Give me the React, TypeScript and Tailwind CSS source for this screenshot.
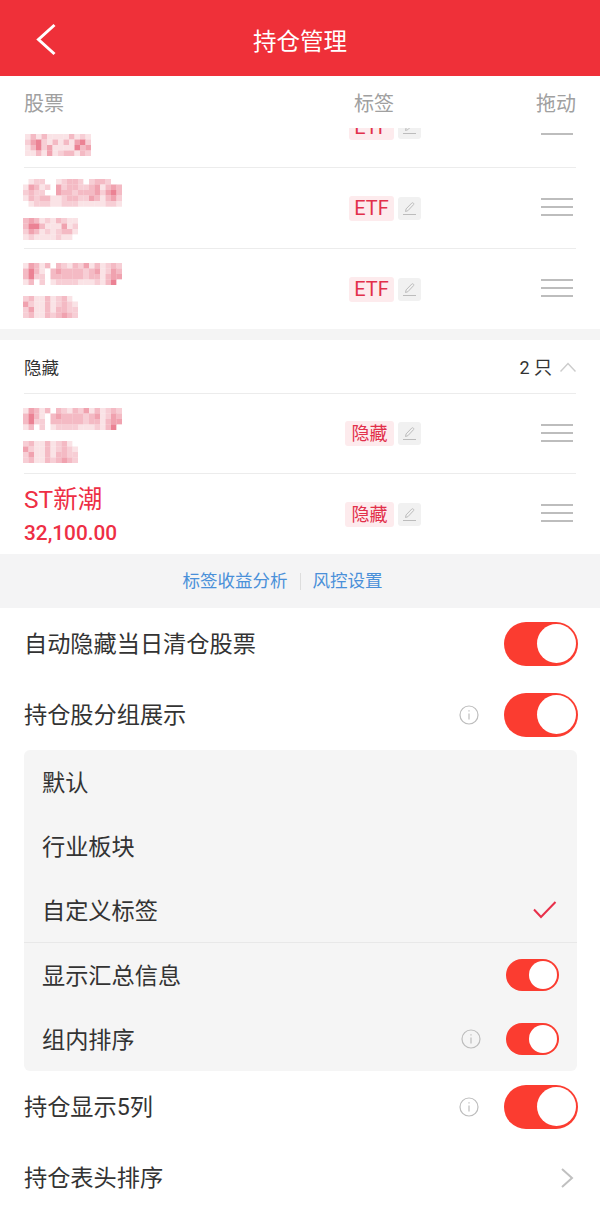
const shades = ["#ffffff", "#fae3e6", "#f7ced5", "#f4bac4", "#f0a2af", "#eb8294"];

const mosaicPriceA = ["131311113121", "245213131452", "135241111534", "113141233132"];
const mosaicNameA = [
  "012200123320233200",
  "143120423322341343",
  "232200433233342453",
  "132331123322431342",
  "012221122211111221",
];
const mosaicPriceB = ["3431213211", "3553111412", "2431212331", "1211112110"];
const mosaicNameB = [
  "143130321324131232",
  "353103433332341243",
  "352203333332331344",
  "130201222211121350",
];
const mosaicPriceC = ["2311312310", "4211312321", "2411313322", "2311323432"];

function Mosaic({ rows }: { rows: string[] }) {
  const cell = 5.5;
  const cols = rows[0].length;
  return (
    <svg
      width={cols * cell}
      height={rows.length * cell}
      viewBox={`0 0 ${cols * cell} ${rows.length * cell}`}
      className="block blur-[0.3px]"
    >
      {rows.map((row, y) =>
        row
          .split("")
          .map((c, x) => (
            <rect
              key={`${x}-${y}`}
              x={x * cell}
              y={y * cell}
              width={cell + 0.2}
              height={cell + 0.2}
              fill={shades[Number(c)]}
            />
          )),
      )}
    </svg>
  );
}

function Pencil() {
  return (
    <svg width="15" height="15" viewBox="0 0 15 15" fill="none" stroke="#bcbcbc" strokeWidth="1">
      <path d="M3.5 10.5l.6-2.6 5.6-5.8c.5-.5 1.2-.5 1.7 0s.5 1.2 0 1.7L5.9 9.7z" />
      <path d="M1 13.5h13" />
    </svg>
  );
}

function Handle() {
  return (
    <div className="mb-[2px] mr-[3px] flex w-8 flex-col gap-[6px]">
      <span className="block h-[2px] bg-[#bdbdbd]" />
      <span className="block h-[2px] bg-[#bdbdbd]" />
      <span className="block h-[2px] bg-[#bdbdbd]" />
    </div>
  );
}

function StockRow({
  tag,
  height,
  border,
  children,
}: {
  tag: string;
  height: string;
  border?: boolean;
  children: React.ReactNode;
}) {
  return (
    <div className={`ml-6 mr-6 flex items-center ${height} ${border ? "border-b border-[#ececec]" : ""}`}>
      <div className="flex flex-1 flex-col">{children}</div>
      <div
        className={`flex h-[25px] items-center justify-center rounded-[3px] bg-[#fdebed] text-[#e2304a] ${
          tag === "ETF" ? "w-[45px] text-[20px]" : "w-[49px] text-[18px]"
        }`}
      >
        {tag}
      </div>
      <div className="ml-1 flex h-[23px] w-[23px] items-center justify-center rounded-[3px] bg-[#f1f1f1]">
        <Pencil />
      </div>
      <div className="ml-[120px]">
        <Handle />
      </div>
    </div>
  );
}

function Toggle({ small }: { small?: boolean }) {
  return (
    <div
      className={`flex items-center justify-end rounded-full bg-[#fb3c30] ${
        small ? "h-8 w-[53px] pr-[2px]" : "h-11 w-[74px] pr-[2px]"
      }`}
    >
      <span className={`block rounded-full bg-white ${small ? "h-7 w-7" : "h-[39px] w-[39px]"}`} />
    </div>
  );
}

function Info() {
  return (
    <svg width="20" height="20" viewBox="0 0 20 20" fill="none" stroke="#bdbdbd">
      <circle cx="10" cy="10" r="9" strokeWidth="1.2" />
      <path d="M10 8.5v6" strokeWidth="1.2" />
      <path d="M10 5.2v1.4" strokeWidth="1.2" />
    </svg>
  );
}

function Row({ label, info }: { label: string; info?: boolean }) {
  return (
    <div className="flex h-[71px] items-center pl-6 pr-[22px]">
      <div className="flex-1 pt-[2px] text-[23.2px] text-[#333333]">{label}</div>
      {info && (
        <div className="mr-[25px]">
          <Info />
        </div>
      )}
      <Toggle />
    </div>
  );
}

function PanelRow({ label, children }: { label: string; children?: React.ReactNode }) {
  return (
    <div className="flex h-16 items-center pl-[18px] pr-[18px]">
      <div className="flex-1 pt-[2px] text-[23.2px] text-[#333333]">{label}</div>
      {children}
    </div>
  );
}

export default function App() {
  return (
    <div className="h-[1207px] w-[600px] overflow-hidden bg-white font-['Roboto','Noto_Sans_CJK_SC',sans-serif]">
      {/* Header */}
      <div className="grid h-[76px] grid-cols-[1fr_auto_1fr] items-center bg-[#ef3039] text-white">
        <svg width="60" height="76" viewBox="0 0 60 76" fill="none" stroke="#ffffff" strokeWidth="3">
          <path d="M54.5 25L38.5 39.5L54.5 54" />
        </svg>
        <div className="pt-[10px] text-[23.5px]">持仓管理</div>
        <div />
      </div>

      {/* Table head */}
      <div className="flex h-[52px] items-center pl-6 pr-6 pt-[3px] text-[20px] text-[#a0a0a0]">
        <div className="flex-1">股票</div>
        <div className="mr-[142px]">标签</div>
        <div>拖动</div>
      </div>

      {/* Scrolled list, first row cut by the table head */}
      <div className="h-[201px] overflow-hidden">
        <div className="mt-[-41px]">
          <StockRow tag="ETF" height="h-[81px]" border>
            <div className="ml-[1px] mt-[35px]">
              <Mosaic rows={mosaicPriceA} />
            </div>
          </StockRow>
          <StockRow tag="ETF" height="h-[81px]" border>
            <div className="ml-[-1px] flex flex-col gap-[11px] pt-[3px]">
              <Mosaic rows={mosaicNameA} />
              <Mosaic rows={mosaicPriceB} />
            </div>
          </StockRow>
          <StockRow tag="ETF" height="h-[80px]">
            <div className="ml-[-1px] flex flex-col gap-[11px] pt-[3px]">
              <Mosaic rows={mosaicNameB} />
              <Mosaic rows={mosaicPriceC} />
            </div>
          </StockRow>
        </div>
      </div>

      <div className="h-[11px] bg-[#f4f4f4]" />

      {/* Hidden group */}
      <div className="ml-6 mr-6 flex h-[54px] items-center justify-between border-b border-[#ececec]">
        <div className="pt-[4px] text-[17.5px] text-[#333333]">隐藏</div>
        <div className="flex items-center">
          <span className="pl-[1px] pt-[2px] text-[18px] text-[#333333]">2 只</span>
          <svg width="16" height="12" viewBox="0 0 16 12" fill="none" stroke="#cccccc" strokeWidth="1.5" className="ml-2">
            <path d="M0.5 10.5L8 2.5L15.5 10.5" />
          </svg>
        </div>
      </div>
      <StockRow tag="隐藏" height="h-[80px]" border>
        <div className="ml-[-1px] flex flex-col gap-[11px] pt-[3px]">
          <Mosaic rows={mosaicNameB} />
          <Mosaic rows={mosaicPriceC} />
        </div>
      </StockRow>
      <StockRow tag="隐藏" height="h-[80px]">
        <div className="pt-[3px] text-[24.5px] leading-[32px] text-[#ee2f45]">ST新潮</div>
        <div className="pt-[2px] text-[20.8px] font-medium leading-[30px] text-[#ee2f45]">32,100.00</div>
      </StockRow>

      {/* Links */}
      <div className="flex h-[54px] items-center bg-[#f4f4f5] text-[17.5px] text-[#4a90d9]">
        <div className="flex-1 pr-3 text-right">标签收益分析</div>
        <div className="h-[17px] w-px bg-[#dddddd]" />
        <div className="flex-1 pl-3">风控设置</div>
      </div>

      <Row label="自动隐藏当日清仓股票" />
      <Row label="持仓股分组展示" info />

      {/* Group options */}
      <div className="ml-6 mr-[23px] rounded-md bg-[#f5f5f5]">
        <PanelRow label="默认" />
        <PanelRow label="行业板块" />
        <PanelRow label="自定义标签">
          <svg width="24" height="18" viewBox="0 0 24 18" fill="none" stroke="#e8304a" strokeWidth="2" className="mr-[2px]">
            <path d="M1 8.5L8 16L22.5 1" />
          </svg>
        </PanelRow>
        <div className="h-px bg-[#e8e8e8]" />
        <PanelRow label="显示汇总信息">
          <Toggle small />
        </PanelRow>
        <PanelRow label="组内排序">
          <div className="mr-[25px]">
            <Info />
          </div>
          <Toggle small />
        </PanelRow>
      </div>

      <Row label="持仓显示5列" info />
      <div className="flex h-[71px] items-center pl-6 pr-[26px]">
        <div className="flex-1 pt-[2px] text-[23.2px] text-[#333333]">持仓表头排序</div>
        <svg width="13" height="20" viewBox="0 0 13 20" fill="none" stroke="#c0c0c0" strokeWidth="2">
          <path d="M1 1L11 10L1 19" />
        </svg>
      </div>
    </div>
  );
}
